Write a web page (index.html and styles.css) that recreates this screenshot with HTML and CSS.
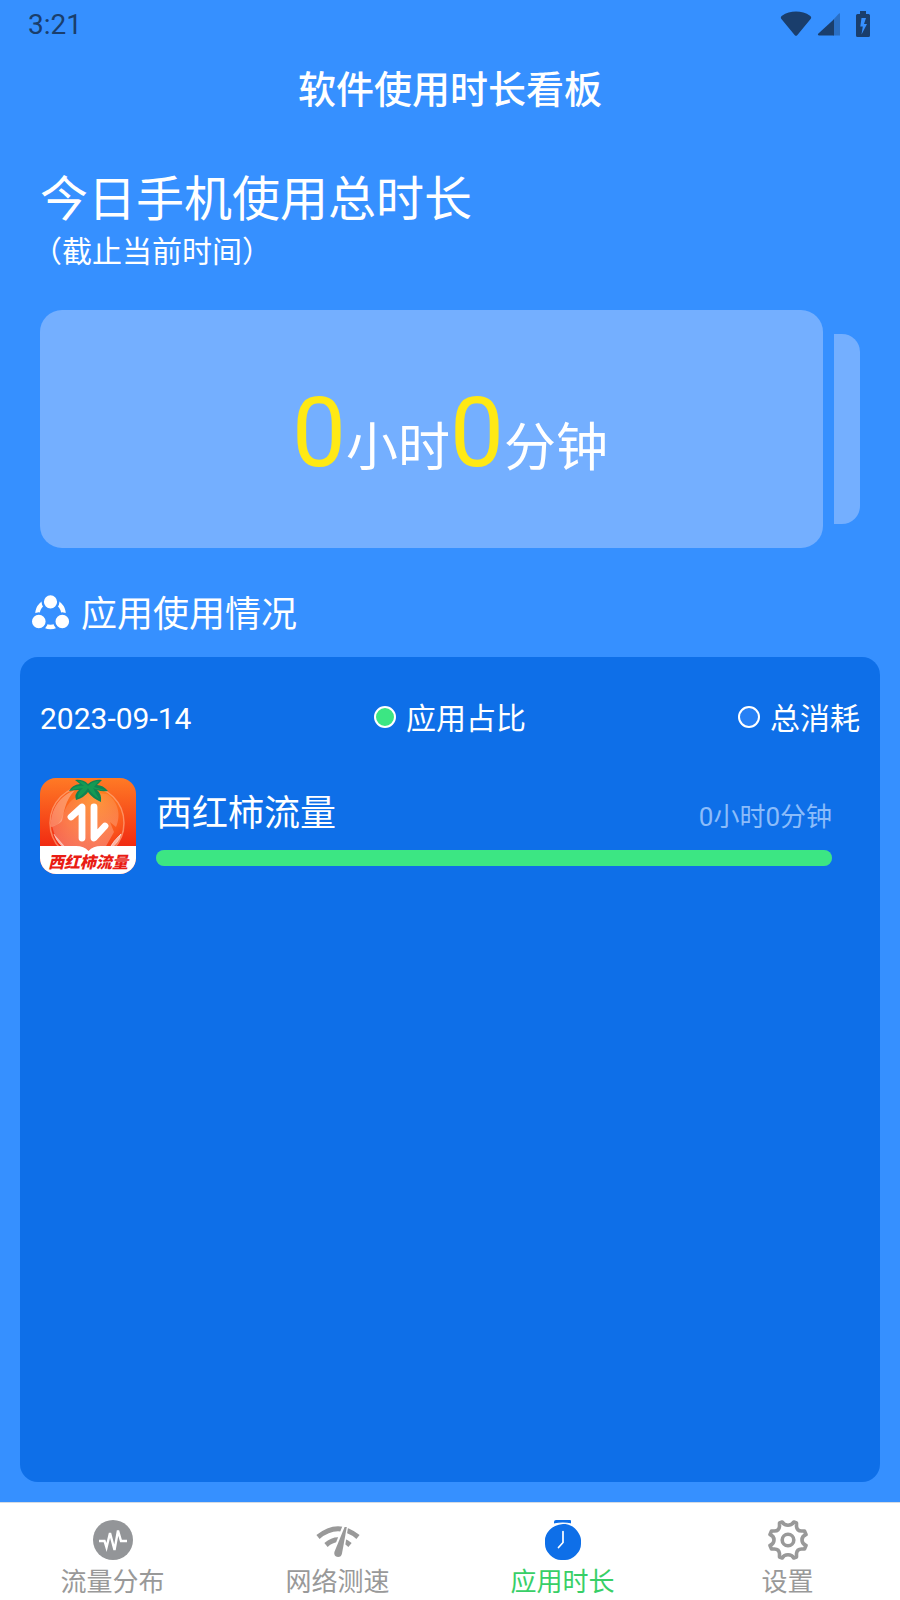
FILE: index.html
```html
<!DOCTYPE html>
<html lang="zh-CN">
<head>
<meta charset="utf-8">
<meta name="viewport" content="width=device-width, initial-scale=1">
<title>软件使用时长看板</title>
<link rel="stylesheet" href="styles.css">
</head>
<body>
<div class="status-bar">
  <span>3:21</span>
  <div class="status-icons">
    <svg width="32" height="26" viewBox="0 0 32 26" aria-hidden="true"><path d="M0.8 6.4Q1 5.4 2 4.8C10-.8 22-.8 30 4.8q1 .6 1.2 1.6q0 .8-.6 1.6L17.200 24.200q-1.200 1.300-2.400 0L1.400 8Q.8 7.200.8 6.400z" fill="currentColor"/></svg>
    <svg width="24" height="26" viewBox="0 0 24 26" aria-hidden="true"><path d="M23 2.500V24.500h-7V9l5.500-6q1.200-1.200 1.500-.5z" fill="currentColor" opacity=".4"/><path d="M17 8.200V24.500H2.200Q0 24.200 1.400 22.600z" fill="currentColor"/></svg>
    <svg class="battery" width="14" height="26" viewBox="0 0 14 26" aria-hidden="true"><path fill-rule="evenodd" d="M4 0h6v3h2.500q1.500 0 1.500 1.500v20q0 1.500-1.500 1.500h-11Q0 26 0 24.500v-20Q0 3 1.500 3H4zM5.500 7L4.300 15.500h2.500L5.500 23.500l5.500-10.500H8L10 7z" fill="currentColor"/></svg>
  </div>
</div>

<header class="title-bar"><h1>软件使用时长看板</h1></header>

<main class="content">
  <section class="summary">
    <h2>今日手机使用总时长</h2>
    <p class="summary-note">（截止当前时间）</p>
    <div class="cards">
      <div class="card-main"></div>
      <div class="card-next"></div>
      <p class="total"><span class="number">0</span>小时<span class="number">0</span>分钟</p>
    </div>
  </section>

  <h2 class="section-title">
    <svg width="38" height="36" viewBox="0 0 38 36" aria-hidden="true"><circle cx="18.500" cy="19" r="13" fill="none" stroke="#fff" stroke-width="4.600"/><g fill="#fff" stroke="#3690ff" stroke-width="2.400"><circle cx="18.500" cy="6.800" r="7.800"/><circle cx="6.800" cy="26.500" r="8"/><circle cx="30.300" cy="26.500" r="8"/></g></svg>
    应用使用情况
  </h2>

  <section class="panel">
    <div class="legend">
      <time datetime="2023-09-14">2023-09-14</time>
      <span class="legend-item"><i class="dot dot-share"></i>应用占比</span>
      <span class="legend-item legend-total"><i class="dot"></i>总消耗</span>
    </div>
    <article class="app">
      <svg class="app-icon" viewBox="0 0 96 96" role="img" aria-label="西红柿流量">
        <defs>
          <linearGradient id="tile" x1="0" y1="0" x2="0" y2="1"><stop offset="0" stop-color="#ff7a25"/><stop offset=".7" stop-color="#f12c12"/></linearGradient>
          <radialGradient id="fruit" cx=".6" cy=".15" r=".9"><stop offset="0" stop-color="#ff8a1e"/><stop offset=".55" stop-color="#fb5a1d"/><stop offset="1" stop-color="#f0200f"/></radialGradient>
          <linearGradient id="shine" x1="0" y1="0" x2="0" y2="1"><stop offset="0" stop-color="#fff" stop-opacity=".1"/><stop offset="1" stop-color="#fff" stop-opacity=".32"/></linearGradient>
        </defs>
        <rect width="96" height="96" fill="url(#tile)"/>
        <circle cx="47" cy="45" r="37" fill="url(#fruit)" stroke="#ffb58d" stroke-opacity=".6" stroke-width="1.500"/>
        <path d="M12 48C24 47 21 34 30 24C38 15 54 14 67 16C79 24 81 38 76 49L70 44L74 54L65 70Q47 82 26 70Q15 62 12 48z" fill="url(#shine)"/>
        <path d="M11 49C10 31 20 18 35 12C25 22 24 35 22 43Q18 47 11 49z" fill="#ffd0b8" opacity=".45"/>
        <path d="M81 56Q78 67 69 71Q74 62 81 56zM14 56Q18 67 27 71" fill="#fff" fill-opacity=".6" stroke="#fff" stroke-opacity=".5"/>
        <path d="M35 2Q43 1 48 6Q54 1 62 2L57 7Q63 7 68 13Q62 14 57 12Q62 16 61 24Q52 20 48 14Q45 19 36 22Q34 16 39 12Q34 12 29 13Q32 7 40 6z" fill="#118352"/>
        <path d="M38 3Q44 3 48 8Q53 3 59 3L54 9L65 12Q57 12 53 10L59 21Q52 17 48 10Q45 15 38 20Q37 15 43 10L31 12Q36 7 44 8z" fill="#159a54"/>
        <path d="M31 39L42 29V60M54 29V60L65 48" fill="none" stroke="#fff" stroke-width="6.800" stroke-linecap="round" stroke-linejoin="round"/>
        <path d="M0 68H36Q44 68 48.500 73Q53 68 61 68H96V96H0z" fill="#fff"/>
        <text class="icon-name" x="48" y="90" text-anchor="middle">西红柿流量</text>
      </svg>
      <div class="app-info">
        <div class="app-line"><h3>西红柿流量</h3><span class="app-time">0小时0分钟</span></div>
        <div class="bar"><div class="bar-fill" style="width:100%"></div></div>
      </div>
    </article>
  </section>
</main>

<nav class="tabs">
  <a class="tab" href="#traffic">
    <svg width="40" height="40" viewBox="0 0 40 40" aria-hidden="true"><circle cx="20" cy="20" r="20" fill="#939598"/><path d="M6 21h5.500l2 6.500L17 13l4.500 17L25 10.500l3 10.500h6" fill="none" stroke="#fff" stroke-width="2.400"/></svg>
    流量分布
  </a>
  <a class="tab" href="#speed">
    <svg width="44" height="40" viewBox="0 0 44 40" aria-hidden="true"><g fill="none" stroke="#999" stroke-width="5"><path d="M2 17Q22 .5 42 17"/><path d="M10 25Q22 14.500 34 25"/></g><path d="M27.200 4L32.400 5L28 33Q27 39 22 39Q16.500 38 16.800 31z" fill="#fff"/><path d="M28.600 7h2.200L26 33.500q-.7 3.500-4 3.500q-4.500-.5-3.600-5z" fill="#999"/></svg>
    网络测速
  </a>
  <a class="tab active" href="#usage" aria-current="page">
    <svg width="40" height="40" viewBox="0 0 40 40" aria-hidden="true"><path d="M13 0h14q1 0 1 1v3q-8-2.200-17 0V2q0-2 2-2zM20 4c5 0 9 1.500 12 4.500S38 16 38 20v4q0 6-5 11t-11 5h-4q-6 0-11-5T2 24v-4q0-5 4.500-10T20 4z" fill="#0e6fe8"/><path d="M11 4.200Q20 1.800 28.500 4.200" fill="none" stroke="#fff" stroke-width="1.200"/><path d="M20 11.500v11l-4.500 5" fill="none" stroke="#fff" stroke-width="1.700" stroke-linecap="round"/></svg>
    应用时长
  </a>
  <a class="tab" href="#settings">
    <svg width="40" height="40" viewBox="0 0 40 40" aria-hidden="true"><g fill="none" stroke="#999" stroke-width="3.600"><path stroke-linejoin="round" d="M14.200 2L11.500 3V6.500Q11 11 6.500 11H3.500L2 14.500Q6 16 6 20T2 25.500L3.500 29H6.500Q11 29 11.500 33.500V37L14.200 38Q16 34.800 20 34.800T25.800 38L28.500 37V33.500Q29 29 33.500 29H36.500L38 25.500Q34 24 34 20T38 14.500L36.500 11H33.500Q29 11 28.500 6.500V3L25.800 2Q24 5.200 20 5.200T14.200 2z"/><circle cx="20" cy="20" r="5.800"/></g></svg>
    设置
  </a>
</nav>
</body>
</html>
```
FILE: styles.css
```css
* { box-sizing: border-box; }

body {
  margin: 0;
  min-height: 100vh;
  display: flex;
  flex-direction: column;
  background: #3690ff;
  color: #fff;
  font-family: Roboto, "Noto Sans CJK SC", sans-serif;
}

h1, h2, h3, p { margin: 0; font-weight: 400; }
svg { display: block; flex: none; }

.status-bar {
  display: flex;
  justify-content: space-between;
  align-items: center;
  height: 48px;
  padding: 0 30px 0 28px;
  color: #1a3e6c;
  font-size: 28px;
  line-height: 32px;
}
.status-bar span { padding-top: 2px; }
.status-icons { display: flex; align-items: center; gap: 5px; }
.battery { margin-left: 10px; }

.title-bar {
  display: flex;
  align-items: center;
  justify-content: center;
  height: 84px;
}
.title-bar h1 { font-size: 38px; line-height: 48px; font-weight: 500; }

.content { flex: 1; display: flex; flex-direction: column; }

.summary { padding: 38px 40px 0; }
.summary h2 { font-size: 48px; line-height: 60px; }
.summary-note { margin: 2px 0 38px -8px; font-size: 30px; line-height: 40px; }

.cards {
  display: grid;
  grid-template-columns: 1fr 26px;
  column-gap: 11px;
  align-items: center;
}
.card-main, .card-next { background: #74afff; }
.card-main { grid-area: 1 / 1; height: 238px; border-radius: 22px; }
.card-next { grid-area: 1 / 2; height: 190px; border-radius: 0 18px 18px 0; }
.total {
  grid-area: 1 / 1 / 2 / 3;
  padding-top: 24px;
  text-align: center;
  font-size: 52px;
  line-height: 112px;
}
.number { font-size: 96px; color: #ffe914; }

.section-title {
  display: flex;
  align-items: center;
  gap: 11px;
  margin: 45px 32px 20px;
  font-size: 36px;
  line-height: 44px;
}
.section-title svg { margin-bottom: 4px; }

.panel {
  flex: 1;
  margin: 0 20px 20px;
  padding: 42px 20px 40px;
  border-radius: 18px;
  background: #0e6fe8;
}
.legend {
  display: grid;
  grid-template-columns: 1fr auto 1fr;
  align-items: center;
  font-size: 30px;
  line-height: 40px;
}
.legend-item { display: flex; align-items: center; gap: 10px; }
.legend-total { justify-self: end; }
.dot {
  width: 22px;
  height: 22px;
  margin-bottom: 4px;
  border: 2px solid #fff;
  border-radius: 50%;
  background: #2680f5;
}
.dot-share { background: #3ce683; }

.app {
  display: flex;
  align-items: flex-end;
  gap: 20px;
  margin-top: 39px;
  padding-right: 28px;
}
.app-icon { width: 96px; height: 96px; border-radius: 16px; }
.icon-name {
  font: italic 900 16px "Noto Sans CJK SC", sans-serif;
  fill: #e91c14;
}
.app-info { flex: 1; padding-bottom: 8px; }
.app-line { display: flex; justify-content: space-between; align-items: baseline; }
.app-line h3 { font-size: 36px; line-height: 44px; }
.app-time { font-size: 26px; color: #8bbcfa; }
.bar { height: 16px; margin-top: 14px; border-radius: 8px; background: #2680f5; }
.bar-fill { height: 100%; border-radius: 8px; background: #3ce683; }

.tabs {
  display: grid;
  grid-template-columns: repeat(4, 1fr);
  height: 98px;
  padding-top: 17px;
  border-top: 1px solid #d5dbe3;
  background: #fff;
}
.tab {
  display: flex;
  flex-direction: column;
  align-items: center;
  gap: 6px;
  color: #999;
  font-size: 26px;
  line-height: 32px;
  text-decoration: none;
}
.tab.active { color: #38cf67; }
```
